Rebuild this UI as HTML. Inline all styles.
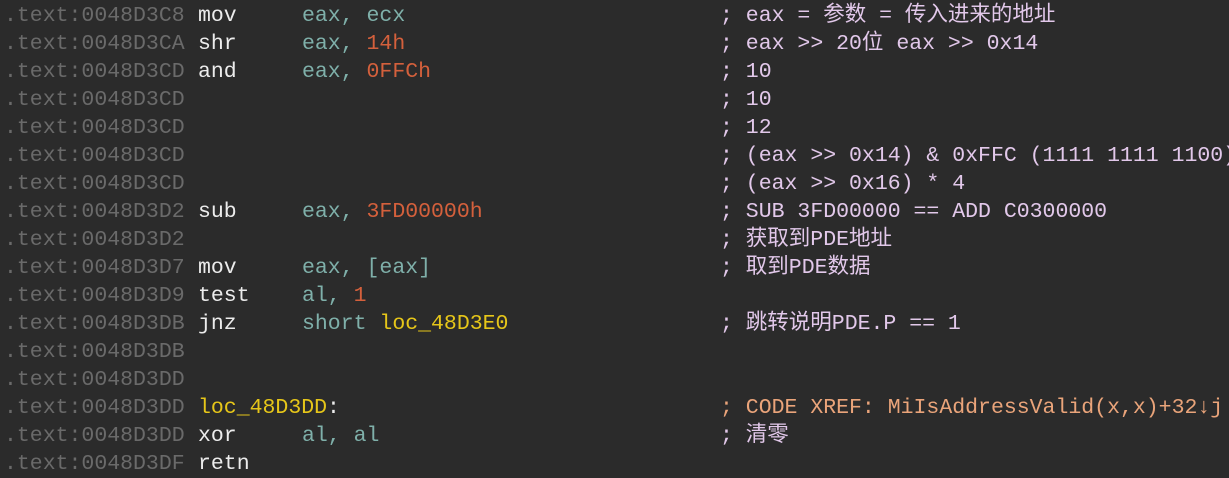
<!DOCTYPE html>
<html><head><meta charset="utf-8"><style>
body{margin:0;width:1229px;height:477px;background:#2b2b2b;overflow:hidden;font-family:"Liberation Mono","Noto Sans CJK SC",monospace;font-size:21.5px;}
.w{position:absolute;left:0;top:2px;width:1229px}
.l{position:absolute;height:28px;line-height:28px;white-space:pre;left:0;width:1229px}
.l span{position:absolute;top:0}
.a{left:4px;color:#6a6a6a}
.m{left:198px;color:#ececec}
.o{left:302px;color:#7fb0aa}
.c{left:720px;color:#e2c8ea}
.n{color:#d4603c}
.y{color:#e6c619}
</style></head><body><div class="w">
<div class="l" style="top:0"><span class="a">.text:0048D3C8</span><span class="m">mov</span><span class="o">eax, ecx</span><span class="c">; eax = 参数 = 传入进来的地址</span></div>
<div class="l" style="top:28px"><span class="a">.text:0048D3CA</span><span class="m">shr</span><span class="o">eax, <b class="n" style="font-weight:normal">14h</b></span><span class="c">; eax &gt;&gt; 20位 eax &gt;&gt; 0x14</span></div>
<div class="l" style="top:56px"><span class="a">.text:0048D3CD</span><span class="m">and</span><span class="o">eax, <b class="n" style="font-weight:normal">0FFCh</b></span><span class="c">; 10</span></div>
<div class="l" style="top:84px"><span class="a">.text:0048D3CD</span><span class="c">; 10</span></div>
<div class="l" style="top:112px"><span class="a">.text:0048D3CD</span><span class="c">; 12</span></div>
<div class="l" style="top:140px"><span class="a">.text:0048D3CD</span><span class="c">; (eax &gt;&gt; 0x14) &amp; 0xFFC (1111 1111 1100)</span></div>
<div class="l" style="top:168px"><span class="a">.text:0048D3CD</span><span class="c">; (eax &gt;&gt; 0x16) * 4</span></div>
<div class="l" style="top:196px"><span class="a">.text:0048D3D2</span><span class="m">sub</span><span class="o">eax, <b class="n" style="font-weight:normal">3FD00000h</b></span><span class="c">; SUB 3FD00000 == ADD C0300000</span></div>
<div class="l" style="top:224px"><span class="a">.text:0048D3D2</span><span class="c">; 获取到PDE地址</span></div>
<div class="l" style="top:252px"><span class="a">.text:0048D3D7</span><span class="m">mov</span><span class="o">eax, [eax]</span><span class="c">; 取到PDE数据</span></div>
<div class="l" style="top:280px"><span class="a">.text:0048D3D9</span><span class="m">test</span><span class="o">al, <b class="n" style="font-weight:normal">1</b></span></div>
<div class="l" style="top:308px"><span class="a">.text:0048D3DB</span><span class="m">jnz</span><span class="o">short <b class="y" style="font-weight:normal">loc_48D3E0</b></span><span class="c">; 跳转说明PDE.P == 1</span></div>
<div class="l" style="top:336px"><span class="a">.text:0048D3DB</span></div>
<div class="l" style="top:364px"><span class="a">.text:0048D3DD</span></div>
<div class="l" style="top:392px"><span class="a">.text:0048D3DD</span><span class="m" style="color:#e6c619">loc_48D3DD<b style="font-weight:normal;color:#ececec">:</b></span><span class="c" style="color:#eaa47a">; CODE XREF: MiIsAddressValid(x,x)+32↓j</span></div>
<div class="l" style="top:420px"><span class="a">.text:0048D3DD</span><span class="m">xor</span><span class="o">al, al</span><span class="c">; 清零</span></div>
<div class="l" style="top:448px"><span class="a">.text:0048D3DF</span><span class="m">retn</span></div>
</div></body></html>
